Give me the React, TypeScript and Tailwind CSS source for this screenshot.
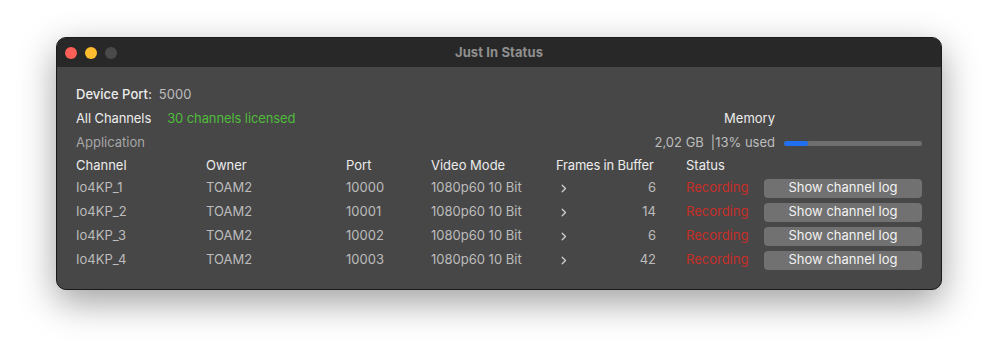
import React from "react";

const rows = [
  { ch: "Io4KP_1", port: "10000", frames: "6" },
  { ch: "Io4KP_2", port: "10001", frames: "14" },
  { ch: "Io4KP_3", port: "10002", frames: "6" },
  { ch: "Io4KP_4", port: "10003", frames: "42" },
];

function Chevron() {
  return (
    <svg width="6" height="9" viewBox="0 0 6 9" fill="none">
      <path d="M1.2 1.2l3.3 3.3-3.3 3.3" stroke="#cfcfcf" strokeWidth="1.3" strokeLinecap="round" strokeLinejoin="round" />
    </svg>
  );
}

export default function App() {
  return (
    <div
      className="w-[998px] h-[364px] bg-white pt-[37px] pl-[56px]"
      style={{ fontFamily: "Inter, 'Noto Sans', sans-serif" }}
    >
      <div className="w-[886px] h-[253px] rounded-[10px] bg-[#474747] border border-[#1a1a1a] shadow-[0_12px_36px_rgba(0,0,0,0.38)] overflow-hidden flex flex-col text-[13px]">
        <div className="relative h-[29px] bg-[#282828] flex items-center shrink-0">
          <div className="flex gap-[8px] pl-[8px]">
            <span className="w-[12px] h-[12px] rounded-full bg-[#fe5f57]" />
            <span className="w-[12px] h-[12px] rounded-full bg-[#febc2e]" />
            <span className="w-[12px] h-[12px] rounded-full bg-[#4a4a4a]" />
          </div>
          <div className="absolute inset-0 flex items-center justify-center font-bold text-[#8f8f8f] tracking-[0.1px]">
            Just In Status
          </div>
        </div>
        <div className="flex-1 px-[19px] pt-[16px]">
          <div className="h-[24px] flex items-center">
            <span className="text-[#ececec] font-medium">Device Port:</span>
            <span className="text-[#bdbdbd] ml-[7px]">5000</span>
          </div>
          <div className="h-[24px] flex items-center justify-between">
            <div className="flex items-center">
              <span className="text-[#ececec] tracking-[-0.1px]">All Channels</span>
              <span className="text-[#4fbb3b] ml-[16px] tracking-[-0.1px]">30 channels licensed</span>
            </div>
            <span className="text-[#ececec] mr-[147px]">Memory</span>
          </div>
          <div className="h-[24px] flex items-center justify-between">
            <span className="text-[#a6a6a6]">Application</span>
            <div className="flex items-center">
              <span className="text-[#bdbdbd]">2,02 GB</span>
              <span className="text-[#bdbdbd] ml-[7px]">|13% used</span>
              <div className="ml-[9px] w-[138px] h-[5px] rounded-full bg-[#6e6e6e] overflow-hidden">
                <div className="h-full w-[24px] rounded-full bg-[#1f6ff0]" />
              </div>
            </div>
          </div>
          <div className="h-[21px] flex items-center text-[#ececec]">
            <span className="w-[130px]">Channel</span>
            <span className="w-[140px]">Owner</span>
            <span className="w-[85px]">Port</span>
            <span className="w-[125px]">Video Mode</span>
            <span className="w-[130px] tracking-[-0.2px]">Frames in Buffer</span>
            <span>Status</span>
          </div>
          {rows.map((r) => (
            <div key={r.ch} className="h-[24px] flex items-center text-[#bcbcbc]">
              <span className="w-[130px]">{r.ch}</span>
              <span className="w-[140px]">TOAM2</span>
              <span className="w-[85px]">{r.port}</span>
              <span className="w-[125px]">1080p60 10 Bit</span>
              <span className="w-[100px] flex items-center justify-between pl-[5px]">
                <Chevron />
                <span>{r.frames}</span>
              </span>
              <span className="w-[78px] pl-[30px] text-[#c72e28] box-content">Recording</span>
              <button className="ml-auto w-[158px] h-[19px] rounded-[4px] bg-[#717171] text-[#f2f2f2] flex items-center justify-center">
                Show channel log
              </button>
            </div>
          ))}
        </div>
      </div>
    </div>
  );
}
